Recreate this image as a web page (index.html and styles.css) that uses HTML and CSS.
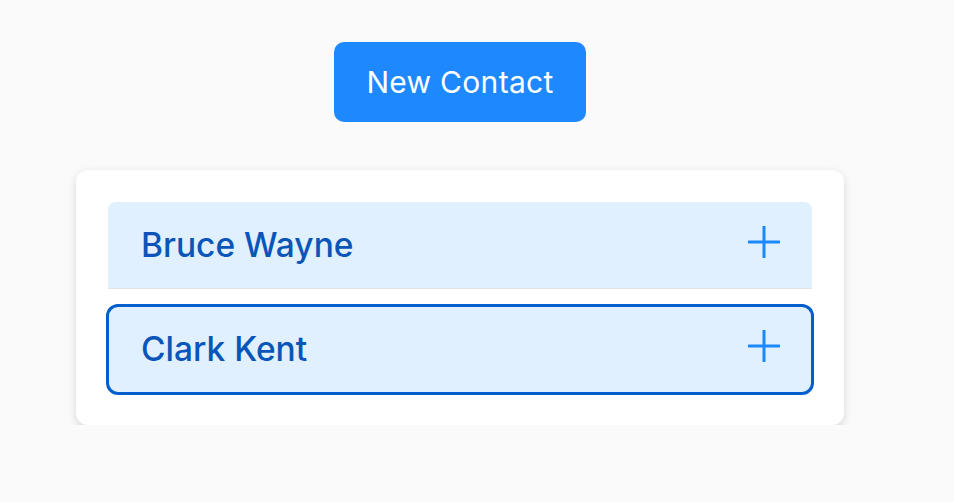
FILE: index.html
```html
<!DOCTYPE html>
<html>
<head>
<meta charset="utf-8">
<link rel="stylesheet" href="styles.css">
</head>
<body>
<div class="page">
  <button class="new-btn">New Contact</button>
  <div class="card">
    <div class="item">
      <span class="name">Bruce Wayne</span>
      <svg class="plus" width="34" height="34" viewBox="0 0 34 34"><path d="M17 1V33M1 17H33" stroke="#1a88ff" stroke-width="3" fill="none"/></svg>
    </div>
    <div class="item focused">
      <span class="name">Clark Kent</span>
      <svg class="plus" width="34" height="34" viewBox="0 0 34 34"><path d="M17 1V33M1 17H33" stroke="#1a88ff" stroke-width="3" fill="none"/></svg>
    </div>
  </div>
</div>
</body>
</html>
```
FILE: styles.css
```css
html, body {
  margin: 0;
  padding: 0;
  background: #fafafa;
  font-family: Inter, "Noto Sans", sans-serif;
}
.page {
  width: 768px;
  margin-left: 76px;
  padding-top: 42px;
  display: flex;
  flex-direction: column;
  align-items: center;
}
.new-btn {
  width: 252px;
  height: 80px;
  border: none;
  border-radius: 10px;
  background: #1e88ff;
  color: #fff;
  font-family: Inter, "Noto Sans", sans-serif;
  font-size: 30px;
  letter-spacing: 0.3px;
  font-weight: 400;
}
.card {
  margin-top: 48px;
  width: 768px;
  box-sizing: border-box;
  padding: 32px;
  background: #fff;
  border-radius: 12px;
  box-shadow: 0 3px 10px rgba(0,0,0,0.14);
  display: flex;
  flex-direction: column;
  gap: 17px;
}
.item {
  height: 86px;
  box-sizing: content-box;
  border-bottom: 1px solid #e2e2e2;
  background: #e0f0ff;
  border-radius: 8px 8px 0 0;
  display: flex;
  align-items: center;
  justify-content: space-between;
  padding: 0 31px 0 33px;
}
.item.focused {
  border-radius: 10px;
  outline: 3px solid #005fcc;
  outline-offset: -1px;
}
.name {
  font-size: 33.5px;
  font-weight: 500;
  color: #0a55b8;
}
.plus {
  display: block;
  margin-top: -6px;
}
```
